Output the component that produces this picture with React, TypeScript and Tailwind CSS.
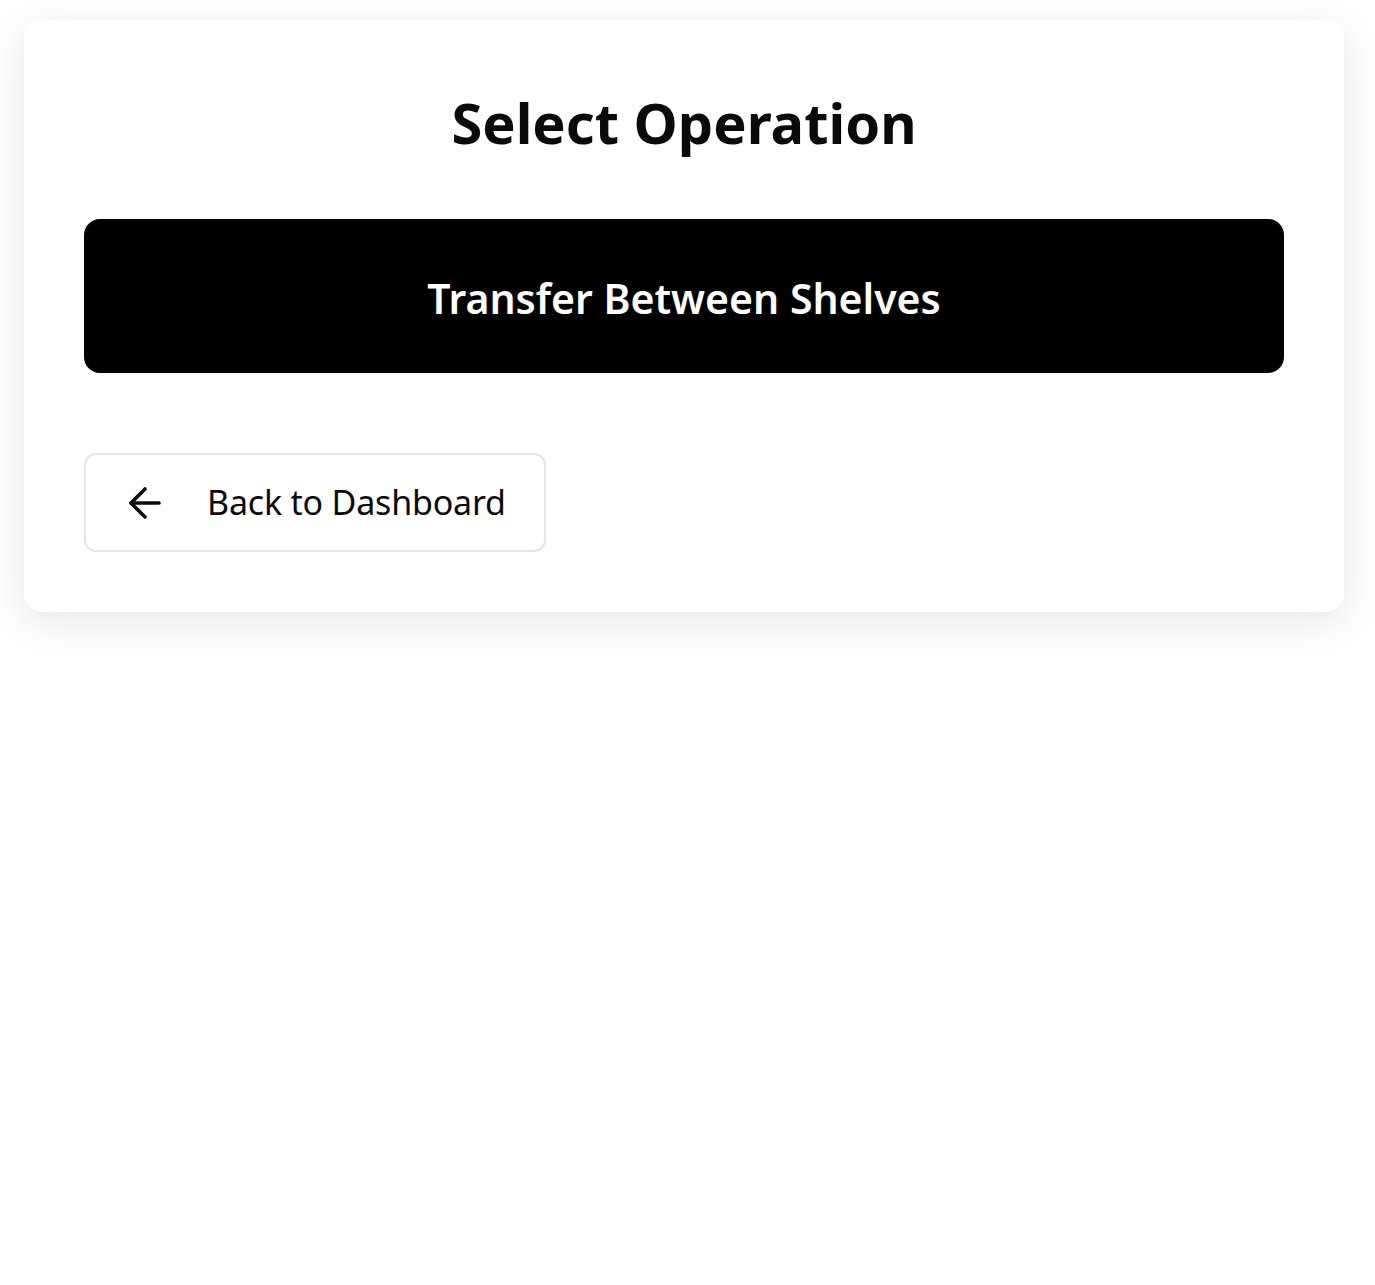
import React from "react";

export default function App() {
  return (
    <div
      className="min-h-[1285px] bg-white pl-[24px] pr-[31px] pt-[20px]"
      style={{ fontFamily: '"Noto Sans", "Open Sans", sans-serif' }}
    >
      <div className="rounded-[18px] bg-white px-[60px] pb-[60px] pt-[60px] shadow-[0_10px_40px_rgba(0,0,0,0.10)]">
        <h1 className="flex h-[88px] items-center justify-center pb-[4px] text-[56px] font-bold leading-none text-[#0a0a0a]">
          Select Operation
        </h1>
        <button className="mt-[51px] flex h-[154px] w-full items-center justify-center rounded-[16px] bg-black pt-[6px] text-[41px] font-semibold text-white">
          Transfer Between Shelves
        </button>
        <button className="mt-[80px] flex h-[99px] items-center gap-[38px] rounded-[12px] border-2 border-[#e5e5e5] bg-white pl-[35px] pr-[38px] text-[34px] tracking-[-0.2px] text-[#0a0a0a]">
          <svg width="48" height="48" viewBox="0 0 24 24" fill="none" stroke="currentColor" strokeWidth="1.8" strokeLinecap="round" strokeLinejoin="round">
            <path d="M19 12H5" />
            <path d="M12 19l-7-7 7-7" />
          </svg>
          <span>Back to Dashboard</span>
        </button>
      </div>
    </div>
  );
}
